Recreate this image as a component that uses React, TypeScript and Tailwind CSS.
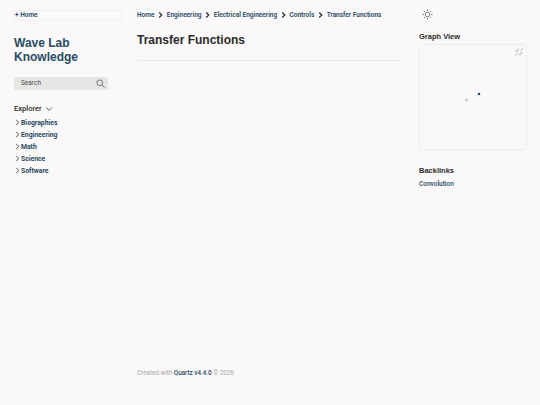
import React from 'react';

const body = "font-['Roboto','Noto_Sans',sans-serif]";
const head = "font-['Liberation_Sans','Inter',sans-serif]";

const crumbs = ['Home', 'Engineering', 'Electrical Engineering', 'Controls'];
const folders = ['Biographies', 'Engineering', 'Math', 'Science', 'Software'];

function Chevron({ className, weight = 1.2 }: { className?: string; weight?: number }) {
  return (
    <svg viewBox="0 0 10 10" className={className} fill="none" stroke="currentColor" strokeWidth={weight}>
      <path d="M3.2 1.5 L6.8 5 L3.2 8.5" />
    </svg>
  );
}

function Sun() {
  return (
    <svg viewBox="0 0 14 14" className="w-[11px] h-[11px] text-[#4e4e4e]" fill="none" stroke="currentColor" strokeWidth="0.9">
      <circle cx="7" cy="7" r="3" />
      <path d="M7 0.5V2.5M7 11.5V13.5M0.5 7H2.5M11.5 7H13.5M2.4 2.4L3.8 3.8M10.2 10.2L11.6 11.6M2.4 11.6L3.8 10.2M10.2 3.8L11.6 2.4" />
    </svg>
  );
}

export default function App() {
  return (
    <div className={`w-[540px] h-[405px] overflow-hidden bg-[#faf8f8] flex ${body}`}>
      <aside className="w-[108px] ml-[14px] pt-[10px] flex flex-col shrink-0">
        <div className="h-[11px] rounded-[3px] border border-[#f0eeee] flex items-center text-[6.5px] font-semibold text-[#284b63] leading-none">
          + Home
        </div>
        <h2 className={`mt-[15px] text-[12px] leading-[14px] font-bold text-[#284b63] ${head}`}>
          Wave Lab<br />Knowledge
        </h2>
        <div className="mt-[13px] w-[94px] h-[13px] rounded-[2px] bg-[#e5e5e5] flex items-center justify-between pl-[7px] pr-[3px] text-[6.5px] text-[#4e4e4e]">
          <span>Search</span>
          <svg viewBox="0 0 10 10" className="w-[9px] h-[9px]" fill="none" stroke="#4e4e4e" strokeWidth="0.8">
            <circle cx="4.2" cy="4.2" r="3.2" />
            <path d="M6.6 6.6 L9.5 9.5" />
          </svg>
        </div>
        <div className="mt-[14px] flex items-center gap-[3px] h-[10px] text-[7.5px] font-medium text-[#2b2b2b]">
          <span>Explorer</span>
          <svg viewBox="0 0 10 10" className="w-[8px] h-[8px]" fill="none" stroke="#2b2b2b" strokeWidth="0.9">
            <path d="M1.5 3 L5 7 L8.5 3" />
          </svg>
        </div>
        <ul className="mt-[3px] flex flex-col text-[6.8px] font-bold text-[#284b63]">
          {folders.map(f => (
            <li key={f} className="h-[12px] flex items-center">
              <Chevron className="w-[7px] h-[7px] -mt-[2px] text-[#2b2b2b]" />
              <span>{f}</span>
            </li>
          ))}
        </ul>
      </aside>

      <main className="w-[266px] ml-[15px] pt-[11px] flex flex-col shrink-0">
        <nav className="h-[10px] flex items-center text-[6.5px] font-semibold text-[#284b63] whitespace-nowrap">
          {crumbs.map(c => (
            <React.Fragment key={c}>
              <span>{c}</span>
              <Chevron weight={1.7} className="w-[7px] h-[8px] mx-[2.7px] -mt-[3px] text-[#2b2b2b]" />
            </React.Fragment>
          ))}
          <span>Transfer Functions</span>
        </nav>
        <h1 className={`mt-[11px] text-[12px] leading-[16px] font-bold text-[#2b2b2b] ${head}`}>Transfer Functions</h1>
        <div className="mt-[12px] h-px bg-[#ececec]" />
        <footer className="mt-auto mb-[27px] text-[6.3px] leading-[10px] text-[#a8a8a8]">
          Created with <span className="font-medium text-[#284b63]">Quartz v4.4.0</span> © 2026
        </footer>
      </main>

      <aside className="w-[108px] ml-[16px] pt-[9px] flex flex-col shrink-0">
        <div className="h-[11px] pl-[3px] flex items-center">
          <Sun />
        </div>
        <h3 className={`mt-[12px] text-[7.5px] leading-[10px] font-bold text-[#2b2b2b] ${head}`}>Graph View</h3>
        <div className="relative mt-[2px] h-[106px] rounded-[3px] border border-[#eeecec]">
          <svg viewBox="0 0 10 10" className="absolute top-[2px] right-[2px] w-[10px] h-[10px]" fill="none" stroke="#b8b8b8" strokeWidth="0.9">
            <path d="M1 9L4 6M9 1L6 4M6 9L6 6L9 6M4 1L4 4L1 4" />
          </svg>
          <svg viewBox="0 0 106 104" className="w-full h-full">
            <line x1="46.5" y1="55" x2="59" y2="49" stroke="#e5e5e5" strokeWidth="0.6" />
            <circle cx="46.5" cy="55" r="1.2" fill="#b8b8b8" />
            <circle cx="59" cy="49" r="1.3" fill="#284b63" />
          </svg>
        </div>
        <h3 className={`mt-[16px] text-[7.5px] leading-[10px] font-bold text-[#2b2b2b] ${head}`}>Backlinks</h3>
        <div className="mt-[3px] text-[6.5px] leading-[10px] font-medium text-[#284b63]">Convolution</div>
      </aside>
    </div>
  );
}
